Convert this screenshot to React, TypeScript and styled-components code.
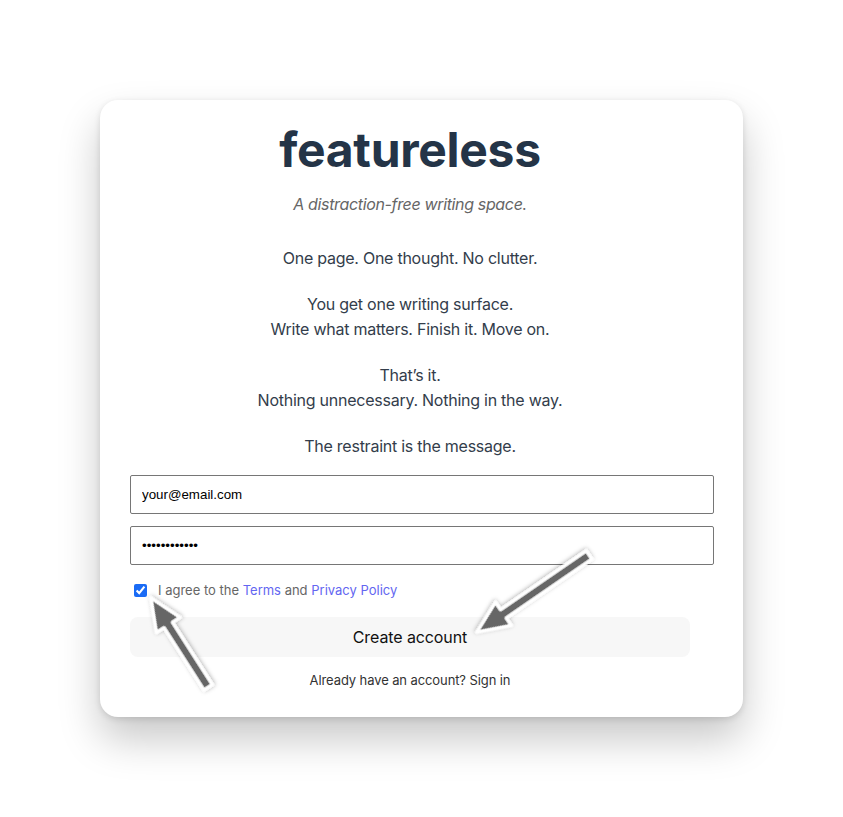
import { FC } from "react";
import styled, { createGlobalStyle } from "styled-components";

const GlobalStyle = createGlobalStyle`
  html, body {
    margin: 0;
    padding: 0;
    background: #ffffff;
  }
  body {
    font-family: "Inter", "Noto Sans", sans-serif;
  }
`;

const Page = styled.div`
  position: relative;
  width: 843px;
  height: 817px;
  display: flex;
  justify-content: center;
  align-items: flex-start;
  padding-top: 100px;
  box-sizing: border-box;
  overflow: hidden;
`;

const Card = styled.div`
  width: 643px;
  box-sizing: border-box;
  padding: 21px 53px 27px 30px;
  background: #ffffff;
  border-radius: 18px;
  box-shadow: 0 22px 42px rgba(0, 0, 0, 0.22), 0 2px 6px rgba(0, 0, 0, 0.12);
`;

const Content = styled.div`
  width: 560px;
  display: flex;
  flex-direction: column;
  align-items: stretch;
`;

const Title = styled.h1`
  margin: 0;
  font-size: 48px;
  line-height: 58px;
  font-weight: 700;
  color: #243447;
  text-align: center;
  letter-spacing: -0.3px;
`;

const Tagline = styled.p`
  margin: 13px 0 0;
  font-size: 16px;
  line-height: 24px;
  font-style: italic;
  color: #666666;
  text-align: center;
  letter-spacing: -0.35px;
`;

const Copy = styled.div`
  margin-top: 30px;
  display: flex;
  flex-direction: column;
  gap: 20px;
`;

const Para = styled.p`
  margin: 0;
  font-size: 16px;
  line-height: 1.6;
  color: #333d4b;
  text-align: center;
  letter-spacing: -0.25px;
`;

const Form = styled.form`
  margin-top: 15.5px;
  display: flex;
  flex-direction: column;
`;

const Field = styled.input<{ $gap?: number }>`
  width: 100%;
  margin-top: ${(p) => p.$gap ?? 0}px;
  padding: 10px 11px;
  border: 1px solid #767676;
  border-radius: 2px;
  font-family: "Liberation Sans", Arial, sans-serif;
  font-size: 13.33px;
  line-height: 17px;
  color: #000000;
  background: #ffffff;
  outline: none;
`;

const AgreeRow = styled.label`
  margin-top: 16px;
  display: flex;
  align-items: center;
  font-size: 13px;
  line-height: 19px;
  color: #666666;
`;

const Check = styled.input`
  margin: 3px 11px 3px 4px;
  width: 13px;
  height: 13px;
  accent-color: #1a6bf5;
`;

const Link = styled.a`
  color: #6366f1;
  text-decoration: none;
`;

const Submit = styled.button`
  margin-top: 17px;
  height: 40px;
  border: none;
  border-radius: 8px;
  background: #f7f7f7;
  font-family: "Inter", sans-serif;
  font-size: 16px;
  letter-spacing: -0.1px;
  color: #111111;
  cursor: pointer;
`;

const Footnote = styled.p`
  margin: 13px 0 0;
  font-size: 13px;
  line-height: 20px;
  color: #333333;
  text-align: center;
  letter-spacing: -0.1px;
`;

const Overlay = styled.svg`
  position: absolute;
  left: 0;
  top: 0;
  width: 843px;
  height: 817px;
  pointer-events: none;
`;

interface IArrow {
  tipX: number;
  tipY: number;
  length: number;
  angle: number;
}

const Arrow: FC<IArrow> = ({ tipX, tipY, length, angle }) => {
  const h = 32;
  const points = [
    [-length, -5],
    [-h, -5],
    [-h, -14],
    [0, 0],
    [-h, 14],
    [-h, 5],
    [-length, 5],
  ]
    .map((p) => p.join(","))
    .join(" ");
  return (
    <polygon
      points={points}
      transform={`translate(${tipX} ${tipY}) rotate(${angle})`}
      fill="#666666"
      stroke="#ffffff"
      strokeWidth={3.5}
      strokeLinejoin="round"
      filter="url(#arrowShadow)"
    />
  );
};

const App: FC = () => {
  return (
    <>
      <GlobalStyle />
      <Page>
        <Card>
          <Content>
            <Title>featureless</Title>
            <Tagline>A distraction-free writing space.</Tagline>
            <Copy>
              <Para>One page. One thought. No clutter.</Para>
              <Para>
                You get one writing surface.
                <br />
                Write what matters. Finish it. Move on.
              </Para>
              <Para>
                That’s it.
                <br />
                Nothing unnecessary. Nothing in the way.
              </Para>
              <Para>The restraint is the message.</Para>
            </Copy>
            <Form onSubmit={(e) => e.preventDefault()}>
              <Field type="email" defaultValue="your@email.com" />
              <Field type="password" defaultValue="abcdefghijkl" $gap={12} />
              <AgreeRow>
                <Check type="checkbox" defaultChecked />
                <span>
                  I agree to the <Link href="#">Terms</Link> and{" "}
                  <Link href="#">Privacy Policy</Link>
                </span>
              </AgreeRow>
              <Submit type="submit">Create account</Submit>
            </Form>
            <Footnote>Already have an account? Sign in</Footnote>
          </Content>
        </Card>
        <Overlay viewBox="0 0 843 817">
          <defs>
            <filter id="arrowShadow" x="-30%" y="-30%" width="160%" height="160%">
              <feDropShadow dx="0" dy="1" stdDeviation="2" floodColor="#000" floodOpacity="0.3" />
            </filter>
          </defs>
          <Arrow tipX={151} tipY={598} length={106} angle={237.4} />
          <Arrow tipX={477} tipY={632} length={136} angle={145.5} />
        </Overlay>
      </Page>
    </>
  );
};

export default App;
